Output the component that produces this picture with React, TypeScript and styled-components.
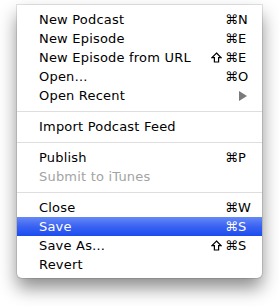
import React from 'react';
import styled, { createGlobalStyle } from 'styled-components';

const GlobalStyle = createGlobalStyle`
  html, body {
    margin: 0;
    padding: 0;
    background: #ffffff;
  }
`

const Page = styled.div`
  width: 279px;
  height: 306px;
  padding: 5px 0 0 17px;
  box-sizing: border-box;
`

const Menu = styled.ul`
  width: 245px;
  margin: 0;
  padding: 5px 0 4px 0;
  list-style: none;
  box-sizing: border-box;
  background: #ffffff;
  border-radius: 0 0 5px 5px;
  box-shadow: 0 0 0 1px rgba(0, 0, 0, 0.1), 0 10px 18px rgba(0, 0, 0, 0.45);
  font-family: 'DejaVu Sans', Verdana, sans-serif;
  font-size: 13px;
`

const Item = styled.li<{ $selected?: boolean; $disabled?: boolean }>`
  display: flex;
  align-items: center;
  height: 19px;
  line-height: 19px;
  padding: 0 10px 0 22px;
  color: ${p => (p.$selected ? '#ffffff' : p.$disabled ? '#a3a3a3' : '#000000')};
  background: ${p => (p.$selected ? 'linear-gradient(to bottom, #6689f6 0%, #3a63f2 50%, #1c4cef 100%)' : 'transparent')};
  white-space: nowrap;
`

const Label = styled.span`
  flex: 1;
  letter-spacing: 0.2px;
`

const Shortcut = styled.span`
  display: flex;
  align-items: center;
`

const Mods = styled.span`
  display: flex;
  align-items: center;
  gap: 3px;
`

const Key = styled.span`
  width: 14px;
  text-align: left;
`

const Arrow = styled.span`
  width: 0;
  height: 0;
  margin-right: 5px;
  border-top: 5px solid transparent;
  border-bottom: 5px solid transparent;
  border-left: 8px solid #7a7a7a;
`

const Separator = styled.li`
  height: 12px;
  display: flex;
  align-items: center;
  &::after {
    content: '';
    flex: 1;
    height: 1px;
    margin-top: 1px;
    background: #dedede;
  }
`

const ShiftIcon = () => (
  <svg width="11" height="11" viewBox="0 0 11 11">
    <path
      d="M5.5 1 L10 5.6 L7.6 5.6 L7.6 10 L3.4 10 L3.4 5.6 L1 5.6 Z"
      fill="none"
      stroke="currentColor"
      strokeWidth="1.2"
      strokeLinejoin="miter"
    />
  </svg>
);

type Entry =
  | { sep: true }
  | { label: string; shift?: boolean; keyChar?: string; submenu?: boolean; selected?: boolean; disabled?: boolean; sep?: false };

const entries: Entry[] = [
  { label: 'New Podcast', keyChar: 'N' },
  { label: 'New Episode', keyChar: 'E' },
  { label: 'New Episode from URL', shift: true, keyChar: 'E' },
  { label: 'Open…', keyChar: 'O' },
  { label: 'Open Recent', submenu: true },
  { sep: true },
  { label: 'Import Podcast Feed' },
  { sep: true },
  { label: 'Publish', keyChar: 'P' },
  { label: 'Submit to iTunes', disabled: true },
  { sep: true },
  { label: 'Close', keyChar: 'W' },
  { label: 'Save', keyChar: 'S', selected: true },
  { label: 'Save As…', shift: true, keyChar: 'S' },
  { label: 'Revert' },
];

const App = () => {
  return (
    <Page>
      <GlobalStyle />
      <Menu>
        {entries.map((e, i) =>
          e.sep ? (
            <Separator key={i} />
          ) : (
            <Item key={i} $selected={e.selected} $disabled={e.disabled}>
              <Label>{e.label}</Label>
              {e.keyChar ? (
                <Shortcut>
                  <Mods>
                    {e.shift ? <ShiftIcon /> : null}
                    <span>⌘</span>
                  </Mods>
                  <Key>{e.keyChar}</Key>
                </Shortcut>
              ) : null}
              {e.submenu ? <Arrow /> : null}
            </Item>
          )
        )}
      </Menu>
    </Page>
  );
}

export default App;
